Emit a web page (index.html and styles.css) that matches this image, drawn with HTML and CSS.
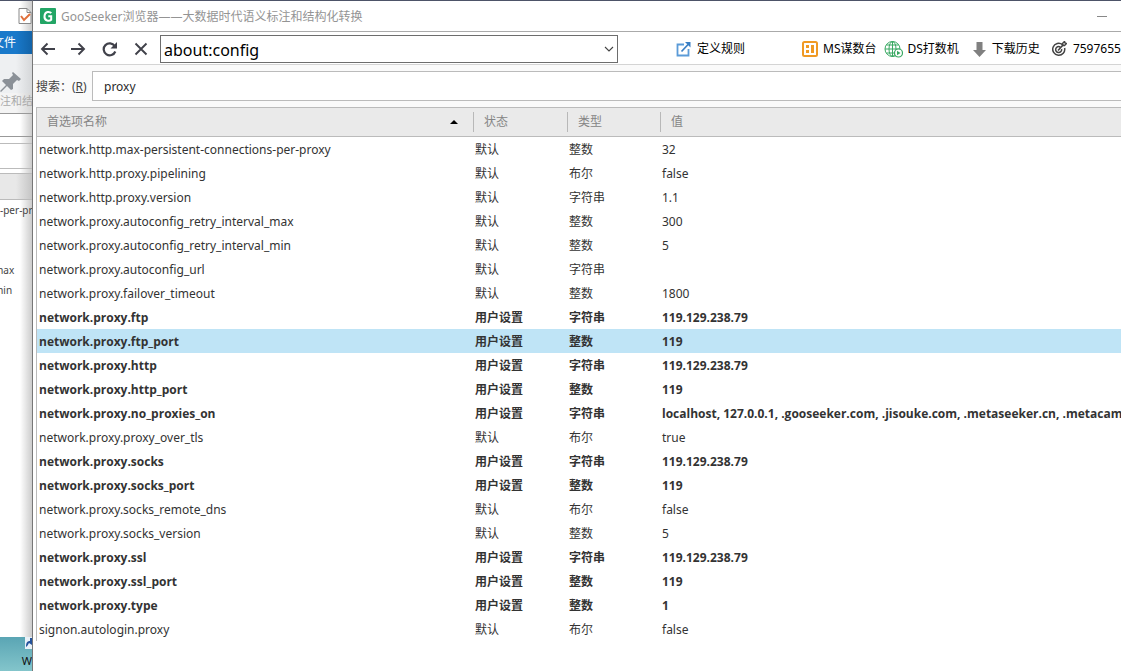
FILE: index.html
```
<!DOCTYPE html>
<html lang="zh-CN">
<head>
<meta charset="utf-8">
<title>GooSeeker浏览器</title>
<link rel="stylesheet" href="styles.css">
</head>
<body>
<aside class="backdrop">
  <div class="back-title">
    <span class="back-divider"></span>
    <svg width="14" height="16" viewBox="0 0 14 16"><path d="M1 .5h8l4 4v11H1z" fill="#fff" stroke="#888"/><path d="M9 .5v4h4" fill="none" stroke="#888"/><path d="M3 8l3 4 6-6" fill="none" stroke="#e0703c" stroke-width="2"/></svg>
  </div>
  <div class="back-file">文件</div>
  <div class="back-ribbon">
    <svg width="22" height="22" viewBox="0 0 22 22"><path d="M13 1l8 7-2 2-2-1-4 4 0 5-2 1-4-4-6 6-1-1 6-6-4-4 2-2 5 0 4-4-1-2z" fill="#8b9198"/></svg>
  </div>
  <div class="back-caption">注和结</div>
  <div class="back-field"></div>
  <div class="back-gap"></div>
  <div class="back-field back-field-search"></div>
  <div class="back-head"></div>
  <div class="back-list">
    <span>-per-pr</span><span></span><span></span><span class="back-cut">max</span><span class="back-cut">min</span>
  </div>
  <div class="desktop">
    <svg width="7" height="12" viewBox="0 0 7 12"><path d="M0 0h7v12H0z" fill="#e8f1f8"/><path d="M1 10c0-4 1-6 4-6V1h2v7L4 6c-1 1-1 3-3 4z" fill="#24539c"/></svg>
    <span>W</span>
  </div>
</aside>
<main class="window">
  <header class="titlebar">
    <svg width="16" height="16" viewBox="0 0 16 16"><rect width="16" height="16" rx="1" fill="#22a565"/><path d="M11.200 5.200C10 3.500 5 2.700 4.500 8s5 5.300 6.700 3.800V8.200H8.300" fill="none" stroke="#fff" stroke-width="2"/></svg>
    <h1 class="title">GooSeeker浏览器——大数据时代语义标注和结构化转换</h1>
    <button class="minimize" aria-label="最小化"></button>
  </header>
  <nav class="toolbar">
    <div class="nav-buttons">
      <button class="icon-button" aria-label="后退"><svg width="16" height="16" viewBox="0 0 16 16"><path d="M15 8H2M7.500 2.500L2 8l5.500 5.500" fill="none" stroke="#40414a" stroke-width="1.900"/></svg></button>
      <button class="icon-button" aria-label="前进"><svg width="16" height="16" viewBox="0 0 16 16"><path d="M0 8h13M7.500 2.500L13 8l-5.500 5.500" fill="none" stroke="#40414a" stroke-width="1.900"/></svg></button>
      <button class="icon-button" aria-label="刷新"><svg width="16" height="16" viewBox="0 0 16 16"><path d="M12.700 5A6 6 0 1 0 13.300 10.500" fill="none" stroke="#40414a" stroke-width="2.200"/><path d="M15 1v6.500H8.500z" fill="#40414a"/></svg></button>
      <button class="icon-button" aria-label="停止"><svg width="16" height="16" viewBox="0 0 16 16"><path d="M2.500 2.500l11 11M13.500 2.500l-11 11" fill="none" stroke="#40414a" stroke-width="1.900"/></svg></button>
    </div>
    <div class="address">
      <input class="address-input" type="text" value="about:config" aria-label="地址">
      <button class="address-drop" aria-label="展开"><svg width="10" height="6" viewBox="0 0 10 6"><path d="M1 1l4 4 4-4" fill="none" stroke="#444" stroke-width="1.100"/></svg></button>
    </div>
    <button class="tool tool-rule"><svg width="15" height="16" viewBox="0 0 15 16"><path d="M8 3.500H1.500v11h11V8" fill="none" stroke="#5b9bd8" stroke-width="1.800"/><path d="M5.500 10.500L13 2.500" fill="none" stroke="#3a7fc4" stroke-width="1.700"/><path d="M9 1h5.500v5.500z" fill="#3a7fc4"/></svg>定义规则</button>
    <button class="tool tool-ms"><svg width="16" height="16" viewBox="0 0 16 16"><rect x="1" y="1" width="14" height="14" rx="1.500" fill="#fff" stroke="#f09a24" stroke-width="2"/><path d="M4 4h3v3H4zM4 9h3v3H4zM9 4h3v8H9z" fill="#f09a24"/></svg>MS谋数台</button>
    <button class="tool tool-ds"><svg width="19" height="17" viewBox="0 0 19 17"><g fill="none" stroke="#39a862"><circle cx="8.500" cy="8" r="7.500"/><ellipse cx="8.500" cy="8" rx="3.500" ry="7.500"/><path d="M8.500 .5v15M1 8h15M2.500 4h12M2.500 12h12"/></g><circle cx="14.500" cy="12" r="4" fill="#fff" stroke="#39a862" stroke-width="1.200"/><path d="M13 9.800v4.400l3.500-2.200z" fill="#39a862"/></svg>DS打数机</button>
    <button class="tool tool-download"><svg width="13" height="15" viewBox="0 0 13 15"><path d="M3.500 0h6v8H13l-6.500 7L0 8h3.500z" fill="#808080"/></svg>下载历史</button>
    <button class="tool tool-user"><svg width="15" height="16" viewBox="0 0 15 16"><g fill="none" stroke="#444" stroke-width="1.500"><path d="M10.500 3.600A6 6 0 1 0 12.600 7"/><path d="M8.200 6A3 3 0 1 0 9.600 8M6 9.500l5.500-6"/><path d="M10.500 4.500V2.500l2-2 .5 1.500 1.500.5-2 2z"/></g></svg>7597655</button>
  </nav>
  <section class="search">
    <label class="search-label" for="filter">搜索：(<u>R</u>)</label>
    <input class="search-input" id="filter" type="text" value="proxy">
  </section>
  <table class="prefs">
    <colgroup><col class="col-name"><col class="col-status"><col class="col-type"><col></colgroup>
    <thead><tr><th><div class="head">首选项名称<svg width="8" height="4" viewBox="0 0 8 4"><path d="M4 0l4 4H0z" fill="#000"/></svg></div></th><th><div class="head">状态</div></th><th><div class="head">类型</div></th><th><div class="head">值</div></th></tr></thead>
    <tbody>
      <tr><td>network.http.max-persistent-connections-per-proxy</td><td>默认</td><td>整数</td><td>32</td></tr>
      <tr><td>network.http.proxy.pipelining</td><td>默认</td><td>布尔</td><td>false</td></tr>
      <tr><td>network.http.proxy.version</td><td>默认</td><td>字符串</td><td>1.1</td></tr>
      <tr><td>network.proxy.autoconfig_retry_interval_max</td><td>默认</td><td>整数</td><td>300</td></tr>
      <tr><td>network.proxy.autoconfig_retry_interval_min</td><td>默认</td><td>整数</td><td>5</td></tr>
      <tr><td>network.proxy.autoconfig_url</td><td>默认</td><td>字符串</td><td></td></tr>
      <tr><td>network.proxy.failover_timeout</td><td>默认</td><td>整数</td><td>1800</td></tr>
      <tr class="user"><td>network.proxy.ftp</td><td>用户设置</td><td>字符串</td><td>119.129.238.79</td></tr>
      <tr class="user selected"><td>network.proxy.ftp_port</td><td>用户设置</td><td>整数</td><td>119</td></tr>
      <tr class="user"><td>network.proxy.http</td><td>用户设置</td><td>字符串</td><td>119.129.238.79</td></tr>
      <tr class="user"><td>network.proxy.http_port</td><td>用户设置</td><td>整数</td><td>119</td></tr>
      <tr class="user"><td>network.proxy.no_proxies_on</td><td>用户设置</td><td>字符串</td><td>localhost, 127.0.0.1, .gooseeker.com, .jisouke.com, .metaseeker.cn, .metacam</td></tr>
      <tr><td>network.proxy.proxy_over_tls</td><td>默认</td><td>布尔</td><td>true</td></tr>
      <tr class="user"><td>network.proxy.socks</td><td>用户设置</td><td>字符串</td><td>119.129.238.79</td></tr>
      <tr class="user"><td>network.proxy.socks_port</td><td>用户设置</td><td>整数</td><td>119</td></tr>
      <tr><td>network.proxy.socks_remote_dns</td><td>默认</td><td>布尔</td><td>false</td></tr>
      <tr><td>network.proxy.socks_version</td><td>默认</td><td>整数</td><td>5</td></tr>
      <tr class="user"><td>network.proxy.ssl</td><td>用户设置</td><td>字符串</td><td>119.129.238.79</td></tr>
      <tr class="user"><td>network.proxy.ssl_port</td><td>用户设置</td><td>整数</td><td>119</td></tr>
      <tr class="user"><td>network.proxy.type</td><td>用户设置</td><td>整数</td><td>1</td></tr>
      <tr><td>signon.autologin.proxy</td><td>默认</td><td>布尔</td><td>false</td></tr>
    </tbody>
  </table>
</main>
</body>
</html>
```
FILE: styles.css
```
* { box-sizing: border-box; }
body {
  margin: 0;
  min-height: 100vh;
  display: flex;
  overflow: hidden;
  background: #fff;
  color: #333;
  font: 12px/24px "Noto Sans", "Noto Sans CJK SC", sans-serif;
}
button, input { font: inherit; color: inherit; margin: 0; }
button { padding: 0; border: 0; background: none; }
svg { display: block; flex: none; }

.backdrop {
  flex: 0 0 32px;
  display: flex;
  flex-direction: column;
  overflow: hidden;
  white-space: nowrap;
  border-top: 1px solid #4d5468;
  background: linear-gradient(90deg, transparent 20px, #0003), #fff;
}
.back-title { height: 30px; display: flex; align-items: center; gap: 11px; padding-left: 7px; }
.back-divider { width: 1px; height: 12px; background: #777; }
.back-file { height: 23px; display: flex; align-items: center; justify-content: flex-end; padding-right: 16px; background: linear-gradient(90deg, #1979ca 16px, #1263a8); color: #fff; }
.back-ribbon { height: 39px; padding-top: 17px; background: linear-gradient(90deg, #eef0f2 16px, #d5d7d9); }
.back-caption { height: 20px; line-height: 16px; font-size: 11px; color: #aaa; background: linear-gradient(90deg, #f4f4f4 16px, #d5d5d5); }
.back-field { height: 24px; border: solid #999; border-width: 1px 0; }
.back-gap { height: 6px; }
.back-field-search { height: 26px; border-color: #bbb; }
.back-head { height: 27px; margin-top: 4px; border: solid #bbb; border-width: 1px 0; background: linear-gradient(90deg, #e8e8e8 16px, #c5c5c5); }
.back-list { flex: 1; line-height: 20px; font-size: 10px; color: #444; }
.back-list span { display: block; height: 20px; }
.back-list .back-cut { margin-left: -6px; }
.desktop {
  height: 34px;
  display: flex;
  flex-direction: column;
  align-items: flex-end;
  background: linear-gradient(180deg, #5aa5b4, #83c5cb);
  color: #111;
  font-size: 11px;
}

.window {
  flex: 1;
  min-width: 0;
  display: flex;
  flex-direction: column;
  overflow: hidden;
  border-top: 1px solid #4d5468;
  border-left: 1px solid #777;
}
.titlebar { height: 31px; display: flex; align-items: center; padding: 0 14px 0 7px; gap: 5px; border-bottom: 1px solid #aaa; }
.title { flex: 1; margin: 0; padding-top: 2px; font-size: 12px; font-weight: 400; color: #949494; }
.minimize { width: 10px; height: 1px; background: #888; }

.toolbar { height: 33px; display: flex; align-items: center; padding: 1px 0 0 7px; border-bottom: 1px solid #d4d4d4; white-space: nowrap; color: #000; }
.nav-buttons { display: flex; gap: 15px; margin-right: 11px; }
.address { flex: 0 0 458px; height: 28px; display: flex; align-items: center; border: 1px solid #6d6d6d; }
.address-input { flex: 1; min-width: 0; border: 0; padding: 2px 3px 0; outline: 0; font-size: 16px; }
.address-drop { padding: 0 3px; }
.tool { display: flex; align-items: center; gap: 6px; flex: none; padding-top: 1px; }
.tool-rule { margin-left: 58px; }
.tool-ms { margin-left: 57px; gap: 5px; }
.tool-ds { margin-left: 7px; gap: 5px; }
.tool-download { margin-left: 14px; }
.tool-user { margin-left: 12px; }

.search { height: 42px; display: flex; align-items: center; padding-left: 3px; background: #fafafa; color: #444; white-space: nowrap; }
.search-label { flex: 0 0 56px; padding-top: 2px; font-family: "Noto Sans", "Noto Sans CJK TC", sans-serif; }
.search-input { flex: 1; min-width: 0; height: 30px; padding: 0 11px; border: 1px solid #bbb; border-right: 0; background: #fff; outline: 0; color: #2b2b2b; }
.search-label:lang(zh) { text-spacing-trim: space-all; }

.prefs { width: calc(100% - 3px); margin-left: 3px; table-layout: fixed; border-collapse: separate; border-spacing: 0; border-left: 1px solid #bbb; }
.col-name { width: 436px; }
.col-status { width: 94px; }
.col-type { width: 93px; }
.prefs th { height: 30px; padding: 0; border: solid #bbb; border-width: 1px 0; background: #eaeaea; font-weight: 400; color: #858585; text-align: left; }
.head { height: 20px; line-height: 22px; padding: 0 15px 0 10px; display: flex; align-items: center; justify-content: space-between; }
.prefs th + th .head { border-left: 1px solid #b8b8b8; }
.prefs td { height: 24px; padding: 2px 2px 0; overflow: hidden; white-space: nowrap; line-height: 22px; }
.user { font-family: "Open Sans", "Noto Sans CJK SC", sans-serif; font-weight: 700; }
.selected { background: #bfe4f6; }
```
